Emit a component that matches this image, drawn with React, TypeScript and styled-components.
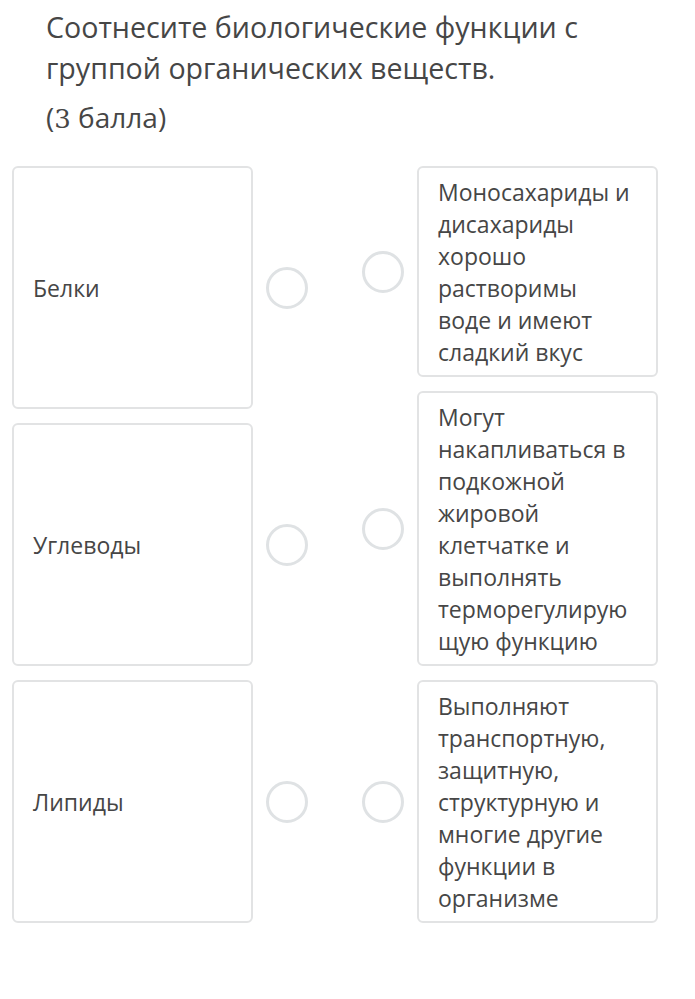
import React from 'react';
import styled, { createGlobalStyle } from 'styled-components';

const GlobalStyle = createGlobalStyle`
  body {
    margin: 0;
    background: #ffffff;
    font-family: 'Open Sans', 'Noto Sans', sans-serif;
    color: #464646;
  }
`;

const Page = styled.div`
  width: 695px;
  padding: 6px 0 40px 0;
`;

const Question = styled.div`
  padding: 0 40px 0 46px;
  font-size: 28.6px;
  line-height: 41px;
`;

const Points = styled.div`
  padding-left: 46px;
  margin-top: 10px;
  height: 39px;
  font-size: 28px;
  line-height: 39px;
`;

const Num = styled.span`
  font-family: 'DejaVu Serif', 'Liberation Serif', serif;
  font-size: 26px;
  line-height: 1;
`;

const Board = styled.div`
  display: flex;
  gap: 54px;
  padding-left: 12px;
  margin-top: 29px;
`;

const Column = styled.div`
  display: flex;
  flex-direction: column;
  gap: 14px;
`;

const Pair = styled.div`
  display: flex;
  align-items: center;
  gap: 13px;
`;

const Card = styled.div<{ $fixed?: boolean }>`
  box-sizing: border-box;
  width: 241px;
  border: 2px solid #e2e3e4;
  border-radius: 6px;
  font-size: 23px;
  line-height: 32px;
  overflow-wrap: anywhere;
  ${(p) =>
    p.$fixed
      ? `
    height: 243px;
    display: flex;
    align-items: center;
    padding: 0 20px 0 19px;
  `
      : `
    padding: 8px 23px 7px 19px;
  `}
`;

const Dot = styled.span`
  box-sizing: border-box;
  flex: none;
  width: 42px;
  height: 42px;
  border-radius: 50%;
  border: 3.5px solid #dfe2e4;
`;

const groups = ['Белки', 'Углеводы', 'Липиды'];

const functions = [
  'Моносахариды и дисахариды хорошо растворимы воде и имеют сладкий вкус',
  'Могут накапливаться в подкожной жировой клетчатке и выполнять терморегулирующую функцию',
  'Выполняют транспортную, защитную, структурную и многие другие функции в организме',
];

const App: React.FC = () => {
  return (
    <Page>
      <GlobalStyle />
      <Question>Соотнесите биологические функции с группой органических веществ.</Question>
      <Points>
        (<Num>3</Num> балла)
      </Points>
      <Board>
        <Column>
          {groups.map((g) => (
            <Pair key={g}>
              <Card $fixed>{g}</Card>
              <Dot />
            </Pair>
          ))}
        </Column>
        <Column>
          {functions.map((f) => (
            <Pair key={f}>
              <Dot />
              <Card>{f}</Card>
            </Pair>
          ))}
        </Column>
      </Board>
    </Page>
  );
};

export default App;
